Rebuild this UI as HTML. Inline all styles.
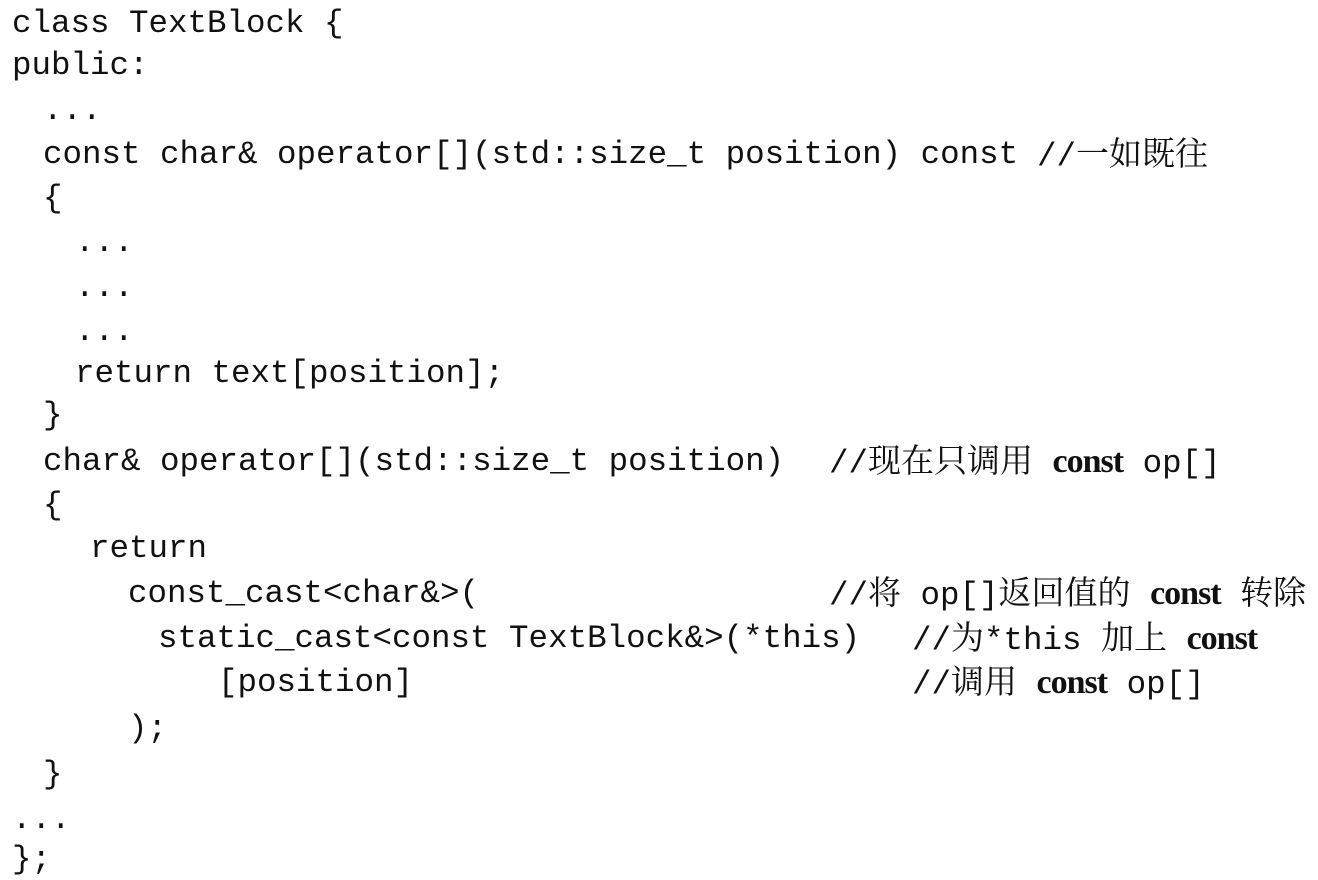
<!DOCTYPE html>
<html><head><meta charset="utf-8"><style>
html,body{margin:0;padding:0;background:#fff;width:1318px;height:877px;overflow:hidden}
.l{position:absolute;white-space:pre;font-family:"Liberation Mono","Noto Sans CJK SC",monospace;font-size:32.5px;line-height:40px;color:#111}
.c{position:absolute;white-space:pre;font-family:"Liberation Mono",monospace;font-size:32.5px;line-height:40px;color:#111}
.z{font-family:"Liberation Serif","Noto Serif CJK SC",serif;font-size:33px}
.b{font-family:"Liberation Serif",serif;font-size:34px;letter-spacing:-1px;font-weight:bold}
</style></head><body>
<div class="l" style="left:12px;top:4px">class TextBlock {</div>
<div class="l" style="left:12px;top:46px">public:</div>
<div class="l" style="left:43px;top:91px">...</div>
<div class="l" style="left:43px;top:135px">const char&amp; operator[](std::size_t position) const</div>
<div class="c" style="left:1037px;top:135px">//<span class="z">一如既往</span></div>
<div class="l" style="left:43px;top:179px">{</div>
<div class="l" style="left:75px;top:223px">...</div>
<div class="l" style="left:75px;top:268px">...</div>
<div class="l" style="left:75px;top:312px">...</div>
<div class="l" style="left:75px;top:354px">return text[position];</div>
<div class="l" style="left:43px;top:396px">}</div>
<div class="l" style="left:43px;top:442px">char&amp; operator[](std::size_t position)</div>
<div class="c" style="left:829px;top:442px">//<span class="z">现在只调用</span> <span class="b">const</span> op[]</div>
<div class="l" style="left:43px;top:486px">{</div>
<div class="l" style="left:90px;top:529px">return</div>
<div class="l" style="left:128px;top:574px">const_cast&lt;char&amp;&gt;(</div>
<div class="c" style="left:829px;top:574px">//<span class="z">将</span> op[]<span class="z">返回值的</span> <span class="b">const</span> <span class="z">转除</span></div>
<div class="l" style="left:158px;top:619px">static_cast&lt;const TextBlock&amp;&gt;(*this)</div>
<div class="c" style="left:912px;top:619px">//<span class="z">为</span>*this <span class="z">加上</span> <span class="b">const</span></div>
<div class="l" style="left:218px;top:663px">[position]</div>
<div class="c" style="left:912px;top:663px">//<span class="z">调用</span> <span class="b">const</span> op[]</div>
<div class="l" style="left:128px;top:709px">);</div>
<div class="l" style="left:43px;top:755px">}</div>
<div class="l" style="left:12px;top:800px">...</div>
<div class="l" style="left:12px;top:840px">};</div>
</body></html>
